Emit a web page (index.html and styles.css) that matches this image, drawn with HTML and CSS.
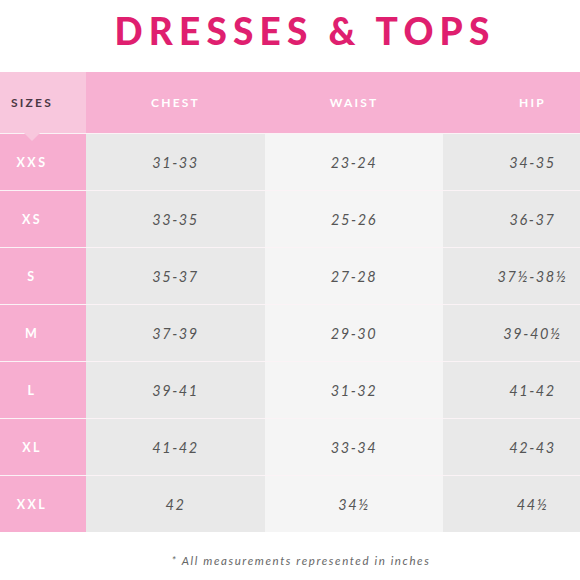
FILE: index.html
```html
<!DOCTYPE html>
<html>
<head>
<meta charset="utf-8">
<link rel="stylesheet" href="styles.css">
</head>
<body>
<div class="page">
  <h1 class="title">DRESSES &amp; TOPS</h1>
  <div class="chart">
    <div class="hcell sizes-head">SIZES</div>
    <div class="hcell">CHEST</div>
    <div class="hcell">WAIST</div>
    <div class="hcell">HIP</div>

    <div class="size">XXS</div><div class="val dark">31-33</div><div class="val light">23-24</div><div class="val dark">34-35</div>
    <div class="size">XS</div><div class="val dark">33-35</div><div class="val light">25-26</div><div class="val dark">36-37</div>
    <div class="size">S</div><div class="val dark">35-37</div><div class="val light">27-28</div><div class="val dark">37½-38½</div>
    <div class="size">M</div><div class="val dark">37-39</div><div class="val light">29-30</div><div class="val dark">39-40½</div>
    <div class="size">L</div><div class="val dark">39-41</div><div class="val light">31-32</div><div class="val dark">41-42</div>
    <div class="size">XL</div><div class="val dark">41-42</div><div class="val light">33-34</div><div class="val dark">42-43</div>
    <div class="size">XXL</div><div class="val dark">42</div><div class="val light">34½</div><div class="val dark">44½</div>
  </div>
  <p class="note">* All measurements represented in inches</p>
</div>
</body>
</html>
```

FILE: styles.css
```css
html, body {
  margin: 0;
  padding: 0;
  background: #ffffff;
  overflow: hidden;
}
.page {
  width: 580px;
  height: 580px;
  overflow: hidden;
  font-family: "Lato", "Open Sans", sans-serif;
}
.title {
  margin: 0;
  height: 72px;
  display: flex;
  align-items: center;
  justify-content: center;
  padding-left: 30px;
  padding-bottom: 12px;
  box-sizing: border-box;
  font-size: 37px;
  font-weight: 900;
  letter-spacing: 6.2px;
  color: #df1f6f;
}
.chart {
  display: grid;
  grid-template-columns: 108px 179px 178px 179px;
  grid-template-rows: 61px repeat(7, 56px);
  row-gap: 1px;
  margin-left: -22px;
  width: 644px;
  background: #fbf3f6;
}
.hcell {
  background: #f7b1d2;
  color: #ffffff;
  font-size: 12px;
  font-weight: 700;
  letter-spacing: 2.2px;
  display: flex;
  align-items: center;
  justify-content: center;
}
.sizes-head {
  background: #f8c7dd;
  color: #4b3844;
  position: relative;
}
.sizes-head::after {
  content: "";
  position: absolute;
  left: 50%;
  bottom: -8px;
  margin-left: -8px;
  border-left: 8px solid transparent;
  border-right: 8px solid transparent;
  border-top: 8px solid #f8c7dd;
  z-index: 2;
}
.size {
  background: #f7aed0;
  color: #ffffff;
  font-size: 12.5px;
  font-weight: 700;
  letter-spacing: 2.4px;
  display: flex;
  align-items: center;
  justify-content: center;
}
.val {
  display: flex;
  align-items: center;
  justify-content: center;
  font-size: 14.5px;
  font-style: italic;
  color: #555555;
  letter-spacing: 1.6px;
}
.dark { background: #e9e9e9; }
.light { background: #f5f5f5; }
.note {
  margin: 0;
  padding-top: 22px;
  text-align: center;
  padding-left: 22px;
  font-size: 11.5px;
  font-style: italic;
  color: #666666;
  letter-spacing: 1.6px;
}
```
